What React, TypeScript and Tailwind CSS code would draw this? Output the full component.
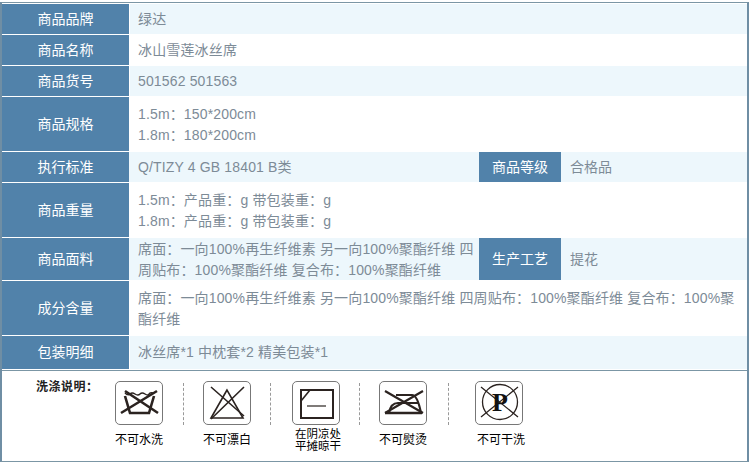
const font = "font-['Liberation_Sans','Noto_Sans_CJK_SC',sans-serif]";

function Head({ children, className = "w-[127px]" }: { children: string; className?: string }) {
  return (
    <div className={`${className} flex shrink-0 items-center justify-center bg-[#5182aa] text-[14px] text-white`}>
      {children}
    </div>
  );
}

function Row({ label, h, tint, lines }: { label: string; h: string; tint?: boolean; lines: string[] }) {
  return (
    <div className={`flex ${h}`}>
      <Head>{label}</Head>
      <div className={`ml-px flex flex-1 flex-col justify-center pl-2 text-[14px] leading-[21px] tracking-[0.15px] text-[#7d8b97] ${lines.length > 1 ? "pt-0.5" : ""} ${tint ? "bg-[#edf7fc]" : "bg-white"}`}>
        {lines.map((l) => (
          <div key={l} className="whitespace-nowrap">{l}</div>
        ))}
      </div>
    </div>
  );
}

function DoubleRow({ label, h, lines, label2, value2 }: { label: string; h: string; lines: string[]; label2: string; value2: string }) {
  return (
    <div className={`flex ${h} bg-[#edf7fc]`}>
      <Head>{label}</Head>
      <div className={`ml-px flex w-[349px] shrink-0 flex-col justify-center pl-2 text-[14px] leading-[21px] tracking-[0.15px] text-[#7d8b97] ${lines.length > 1 ? "pt-0.5" : ""}`}>
        {lines.map((l) => (
          <div key={l} className="whitespace-nowrap">{l}</div>
        ))}
      </div>
      <Head className="w-[82px]">{label2}</Head>
      <div className="flex flex-1 items-center pl-[9px] text-[14px] text-[#7d8b97]">{value2}</div>
    </div>
  );
}

function Care({ icon, label }: { icon: React.ReactNode; label: React.ReactNode }) {
  return (
    <div className="flex w-[48px] flex-col items-center">
      <div className="h-[44px] w-[48px] rounded-[5px] border border-[#777] bg-white">
        <svg viewBox="0 0 46 42" className="h-full w-full" fill="none" stroke="#2b2320">
          {icon}
        </svg>
      </div>
      {label}
    </div>
  );
}

function Dash({ className }: { className: string }) {
  return <div className={`${className} mt-[2px] h-[42px] w-0 border-l border-dashed border-[#999]`} />;
}

const careLabel = "mt-[8px] whitespace-nowrap text-[12px] leading-[14px] text-black";

export default function App() {
  return (
    <div className={`h-[471px] w-[750px] bg-white ${font}`}>
      <div className="h-[2px]" />
      <div className="h-[460px] w-[749px] border-x-2 border-y border-x-[#6f8ea4] border-y-[#7b96a5] bg-white pt-px">
        <div className="flex flex-col gap-px">
          <Row label="商品品牌" h="h-[30px]" tint lines={["绿达"]} />
          <Row label="商品名称" h="h-[30px]" lines={["冰山雪莲冰丝席"]} />
          <Row label="商品货号" h="h-[30px]" tint lines={["501562 501563"]} />
          <Row label="商品规格" h="h-[54px]" lines={["1.5m：150*200cm", "1.8m：180*200cm"]} />
          <DoubleRow label="执行标准" h="h-[30px]" lines={["Q/TIZY 4 GB 18401 B类"]} label2="商品等级" value2="合格品" />
          <Row label="商品重量" h="h-[54px]" lines={["1.5m：产品重：g 带包装重：g", "1.8m：产品重：g 带包装重：g"]} />
          <DoubleRow
            label="商品面料"
            h="h-[42px]"
            lines={["席面：一向100%再生纤维素 另一向100%聚酯纤维 四", "周贴布：100%聚酯纤维 复合布：100%聚酯纤维"]}
            label2="生产工艺"
            value2="提花"
          />
          <Row
            label="成分含量"
            h="h-[54px]"
            lines={["席面：一向100%再生纤维素 另一向100%聚酯纤维 四周贴布：100%聚酯纤维 复合布：100%聚", "酯纤维"]}
          />
          <Row label="包装明细" h="h-[33px]" tint lines={["冰丝席*1 中枕套*2 精美包装*1"]} />
        </div>
        <div className="mt-px flex border-t border-[#7b96a5] pt-[10px]">
          <div className="-mt-px ml-[34px] w-[79px] whitespace-nowrap text-[12px] font-bold leading-[14px] tracking-[0.5px] text-[#222]">洗涤说明：</div>
          <Care
            icon={
              <g strokeWidth="2.6">
                <path d="M9 11q3 3 5 1t5 0 5 0 5 0 4 0 4-1" strokeWidth="1.5" />
                <path d="M9 14l5 17h19l5-17" />
                <path d="M9 9l33 22M41 9L5 31" />
              </g>
            }
            label={<div className={careLabel}>不可水洗</div>}
          />
          <Dash className="ml-[20px] mr-[19px]" />
          <Care
            icon={
              <g strokeWidth="1.6">
                <path d="M23 8L7 36h32z" />
                <path d="M7 5l33 29M40 5L7 37" />
              </g>
            }
            label={<div className={careLabel}>不可漂白</div>}
          />
          <Dash className="ml-[19px] mr-[21px]" />
          <Care
            icon={
              <g strokeWidth="2">
                <rect x="8" y="8" width="32" height="28" />
                <path d="M8 19l9-11" strokeWidth="1.6" />
                <path d="M14 24h19" strokeWidth="1.2" />
              </g>
            }
            label={
              <div className="mt-[3px] whitespace-nowrap pl-1 text-center text-[11.5px] leading-[12px] text-black">
                在阴凉处
                <br />
                平摊晾干
              </div>
            }
          />
          <Dash className="ml-[19px] mr-[19px]" />
          <Care
            icon={
              <g strokeWidth="2.2">
                <path d="M5 31h37" strokeWidth="2.6" />
                <path d="M9 31c1-6 4-10 9-10h21" />
                <path d="M16 13h16c4 0 7 8 9 18" />
                <path d="M5 9l38 22M43 9L5 31" />
              </g>
            }
            label={<div className={careLabel}>不可熨烫</div>}
          />
          <Dash className="ml-[21px] mr-[26px]" />
          <Care
            icon={
              <g strokeWidth="1.3">
                <circle cx="24" cy="20" r="17.5" />
                <path d="M5 5l37 30M42 5L5 35" />
                <text x="24" y="29" textAnchor="middle" fontSize="26" fontWeight="700" fontFamily="'Liberation Serif',serif" fill="#111" stroke="none">P</text>
              </g>
            }
            label={<div className={`${careLabel} pl-1`}>不可干洗</div>}
          />
        </div>
      </div>
    </div>
  );
}
